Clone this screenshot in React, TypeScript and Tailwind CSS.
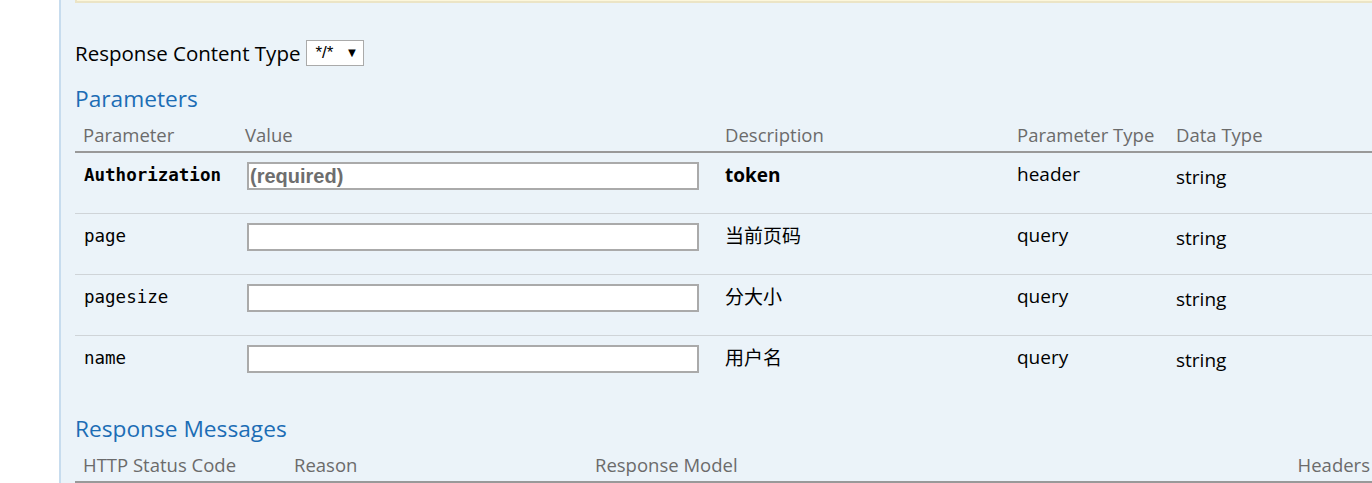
const params = [
  { name: "Authorization", required: true, desc: "token", paramType: "header", dataType: "string" },
  { name: "page", required: false, desc: "当前页码", paramType: "query", dataType: "string" },
  { name: "pagesize", required: false, desc: "分大小", paramType: "query", dataType: "string" },
  { name: "name", required: false, desc: "用户名", paramType: "query", dataType: "string" },
];

const sans = "font-['Open_Sans','Noto_Sans_CJK_SC',sans-serif]";
const paramCols = "grid grid-cols-[170px_480px_292px_159px_1fr]";

export default function App() {
  return (
    <div className={`flex h-[483px] w-[1372px] overflow-hidden bg-white ${sans}`}>
      <div className="w-[59px] shrink-0 bg-white" />
      <div className="flex-1 border-l-2 border-[#c7dcee] bg-[#ebf3f9] pl-[14px]">
        <div className="h-[3px] border-b-2 border-l-2 border-[#ebe4c6] bg-[#fcf6db]" />

        <div className="mt-[37px] flex items-center gap-[6px] text-[20.5px] leading-[26px] text-black">
          <span>Response Content Type</span>
          <div className="flex h-[26px] w-[58px] items-center gap-[12px] border border-[#aaa] bg-white pl-[8px] font-['Liberation_Sans',sans-serif] text-[17px]">
            <span>*/*</span>
            <span className="text-[13px]">▼</span>
          </div>
        </div>

        <h4 className="mt-[18px] text-[22.7px] leading-[30px] text-[#1c6db5]">Parameters</h4>

        <div className={`${paramCols} mt-[5px] h-[34px] items-center border-b-2 border-[#999] text-[18.5px] text-[#6b6b6b]`}>
          <div className="pl-[8px]">Parameter</div>
          <div>Value</div>
          <div>Description</div>
          <div>Parameter Type</div>
          <div>Data Type</div>
        </div>

        {params.map((p, i) => (
          <div
            key={p.name}
            className={`${paramCols} h-[61px] text-[19px] text-black ${
              i < params.length - 1 ? "border-b border-[#cfd4d8]" : ""
            }`}
          >
            <div
              className={`pl-[9px] pt-[10px] font-['DejaVu_Sans_Mono',monospace] text-[17.5px] leading-[24px] ${
                p.required ? "font-bold" : ""
              }`}
            >
              {p.name}
            </div>
            <div className="pl-[2px] pt-[9px]">
              <div className="flex h-[28px] w-[452px] items-center border-2 border-[#aaa] bg-white pl-[1px] font-['Liberation_Sans',sans-serif] text-[20px] font-bold text-[#6e6e6e]">
                {p.required ? "(required)" : ""}
              </div>
            </div>
            <div className={`pt-[9px] leading-[26px] ${p.required ? "font-bold" : ""}`}>{p.desc}</div>
            <div className="pt-[8px] leading-[26px]">{p.paramType}</div>
            <div className="pt-[11px] leading-[26px]">{p.dataType}</div>
          </div>
        ))}

        <h4 className="mt-[17px] text-[22.7px] leading-[30px] text-[#1c6db5]">Response Messages</h4>

        <div className="mt-[4px] grid h-[35px] grid-cols-[211px_301px_1fr_auto] items-center border-b-2 border-[#999] text-[18.5px] text-[#6b6b6b]">
          <div className="pl-[8px]">HTTP Status Code</div>
          <div className="pl-[8px]">Reason</div>
          <div className="pl-[8px]">Response Model</div>
          <div className="pr-[2px]">Headers</div>
        </div>
      </div>
    </div>
  );
}
